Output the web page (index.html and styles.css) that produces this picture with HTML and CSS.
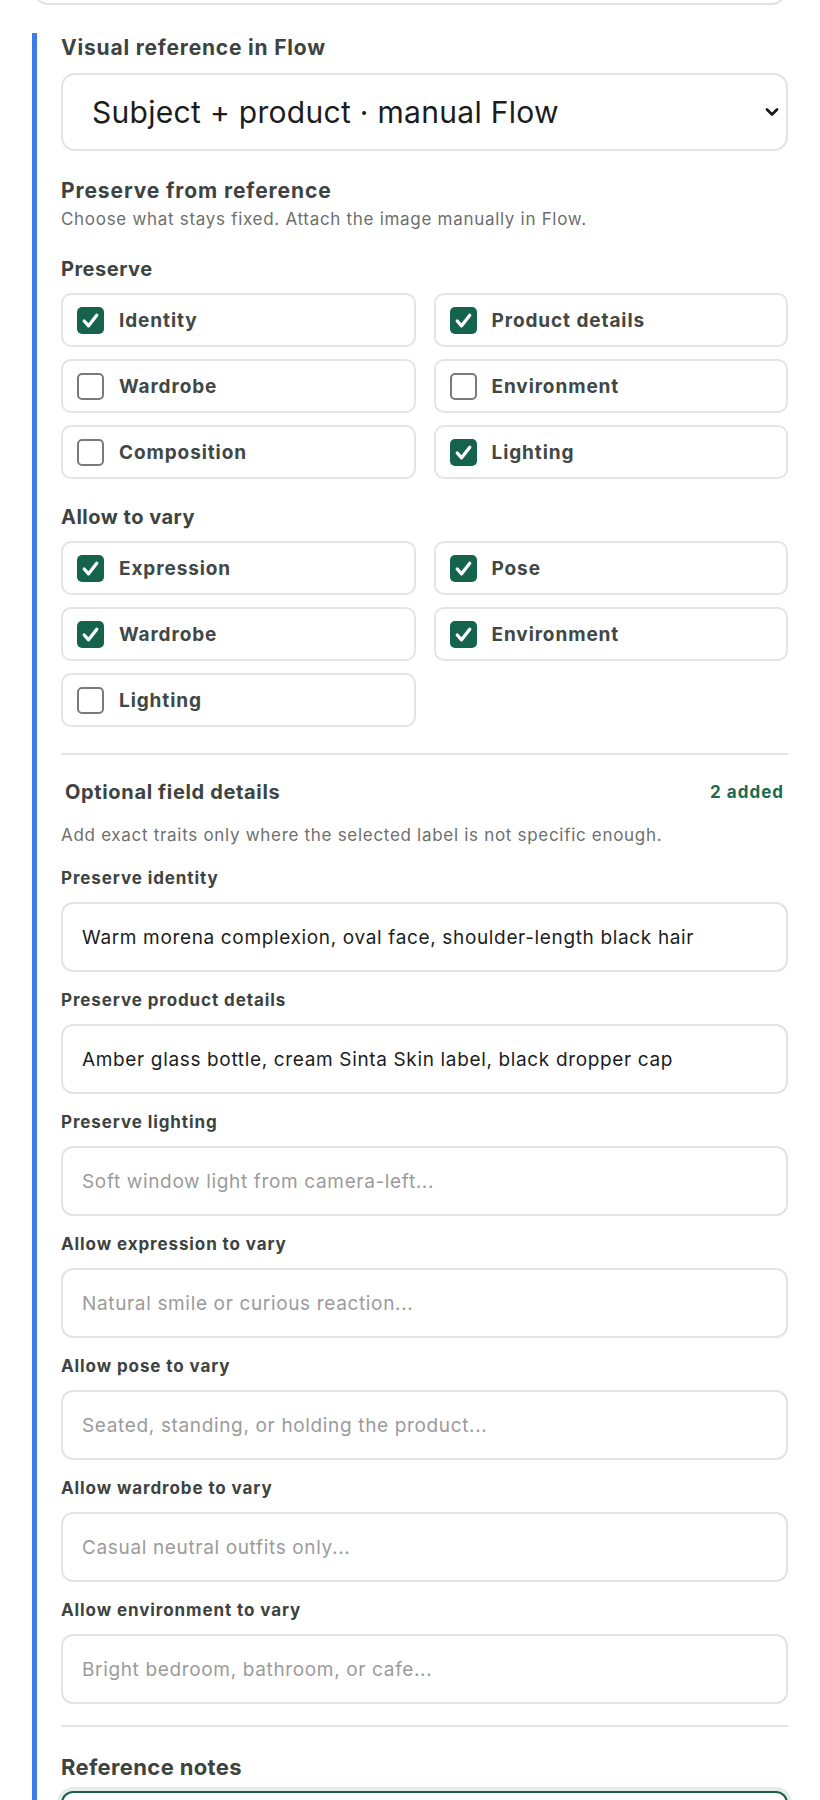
FILE: index.html
```html
<!DOCTYPE html>
<html lang="en">
	<head>
		<meta charset="utf-8">
		<title>Visual reference in Flow</title>
		<link rel="stylesheet" href="styles.css">
	</head>
	<body>
		<div class="page">
			<div class="prev-field"></div>

			<section class="ref-block">
				<label class="field-title" for="refmode">Visual reference in Flow</label>
				<div class="select-wrap">
					<select id="refmode" class="select">
						<option>Subject + product · manual Flow</option>
						<option>Subject only · manual Flow</option>
						<option>Product only · manual Flow</option>
					</select>
					<svg class="chevron" width="14" height="10" viewBox="0 0 14 10">
						<path d="M2 2.5 L7 7.5 L12 2.5" fill="none" stroke="#1c1c1c" stroke-width="2.8" stroke-linecap="round" stroke-linejoin="round"/>
					</svg>
				</div>

				<h3 class="group-title">Preserve from reference</h3>
				<p class="hint">Choose what stays fixed. Attach the image manually in Flow.</p>

				<div class="sub-title">Preserve</div>
				<div class="check-grid">
					<label class="check-card"><span class="box on"><svg viewBox="0 0 28 28"><path d="M7.5 14.5 L12 19.5 L20.5 8.5"/></svg></span>Identity</label>
					<label class="check-card"><span class="box on"><svg viewBox="0 0 28 28"><path d="M7.5 14.5 L12 19.5 L20.5 8.5"/></svg></span>Product details</label>
					<label class="check-card"><span class="box"></span>Wardrobe</label>
					<label class="check-card"><span class="box"></span>Environment</label>
					<label class="check-card"><span class="box"></span>Composition</label>
					<label class="check-card"><span class="box on"><svg viewBox="0 0 28 28"><path d="M7.5 14.5 L12 19.5 L20.5 8.5"/></svg></span>Lighting</label>
				</div>

				<div class="sub-title vary">Allow to vary</div>
				<div class="check-grid">
					<label class="check-card"><span class="box on"><svg viewBox="0 0 28 28"><path d="M7.5 14.5 L12 19.5 L20.5 8.5"/></svg></span>Expression</label>
					<label class="check-card"><span class="box on"><svg viewBox="0 0 28 28"><path d="M7.5 14.5 L12 19.5 L20.5 8.5"/></svg></span>Pose</label>
					<label class="check-card"><span class="box on"><svg viewBox="0 0 28 28"><path d="M7.5 14.5 L12 19.5 L20.5 8.5"/></svg></span>Wardrobe</label>
					<label class="check-card"><span class="box on"><svg viewBox="0 0 28 28"><path d="M7.5 14.5 L12 19.5 L20.5 8.5"/></svg></span>Environment</label>
					<label class="check-card"><span class="box"></span>Lighting</label>
				</div>

				<hr class="divider">

				<div class="details-head">
					<span>Optional field details</span>
					<span class="count">2 added</span>
				</div>
				<p class="hint details-hint">Add exact traits only where the selected label is not specific enough.</p>

				<div class="field">
					<label class="field-label">Preserve identity</label>
					<input class="text-input" type="text" value="Warm morena complexion, oval face, shoulder-length black hair">
				</div>
				<div class="field">
					<label class="field-label">Preserve product details</label>
					<input class="text-input" type="text" value="Amber glass bottle, cream Sinta Skin label, black dropper cap">
				</div>
				<div class="field">
					<label class="field-label">Preserve lighting</label>
					<input class="text-input" type="text" placeholder="Soft window light from camera-left...">
				</div>
				<div class="field">
					<label class="field-label">Allow expression to vary</label>
					<input class="text-input" type="text" placeholder="Natural smile or curious reaction...">
				</div>
				<div class="field">
					<label class="field-label">Allow pose to vary</label>
					<input class="text-input" type="text" placeholder="Seated, standing, or holding the product...">
				</div>
				<div class="field">
					<label class="field-label">Allow wardrobe to vary</label>
					<input class="text-input" type="text" placeholder="Casual neutral outfits only...">
				</div>
				<div class="field">
					<label class="field-label">Allow environment to vary</label>
					<input class="text-input" type="text" placeholder="Bright bedroom, bathroom, or cafe...">
				</div>

				<hr class="divider bottom">

				<label class="field-title notes-title">Reference notes</label>
				<textarea class="notes"></textarea>
			</section>
		</div>
	</body>
</html>
```

FILE: styles.css
```css
* {
	margin: 0;
	padding: 0;
	box-sizing: border-box;
}

body {
	background: #fff;
	font-family: "Inter", "Liberation Sans", sans-serif;
	color: #3d4341;
}

.page {
	padding: 0 32px 0 32px;
}

.prev-field {
	height: 60px;
	margin-top: -55px;
	margin-left: 2px;
	margin-right: 2px;
	border: 2px solid #e3e3e3;
	border-radius: 14px;
}

.ref-block {
	margin-top: 28px;
	border-left: 5px solid #3b7de2;
	padding: 3px 0 0 24px;
}

	.field-title {
		display: block;
		font-size: 21px;
		line-height: 24px;
		font-weight: 700;
		letter-spacing: 0.8px;
		color: #3d4341;
	}

	.select-wrap {
		position: relative;
		margin-top: 13px;
	}

		.select {
			display: block;
			width: 100%;
			height: 78px;
			padding: 0 50px 0 29px;
			border: 2px solid #e3e3e3;
			border-radius: 14px;
			background: #fff;
			font-family: inherit;
			font-size: 30px;
			letter-spacing: 0.3px;
			color: #1c1c1c;
			appearance: none;
			-webkit-appearance: none;
			outline: none;
		}

		.chevron {
			position: absolute;
			right: 9px;
			top: 34px;
		}

	.group-title {
		margin-top: 28px;
		font-size: 21px;
		line-height: 24px;
		font-weight: 700;
		letter-spacing: 0.9px;
	}

	.hint {
		margin-top: 5px;
		font-size: 17px;
		line-height: 22px;
		letter-spacing: 0.7px;
		color: #6d6f6e;
	}

	.sub-title {
		margin-top: 27px;
		font-size: 20px;
		line-height: 24px;
		font-weight: 700;
		letter-spacing: 0.5px;
	}

	.sub-title.vary {
		margin-top: 26px;
	}

	.check-grid {
		display: grid;
		grid-template-columns: 1fr 1fr;
		gap: 12px 18px;
		margin-top: 12px;
	}

		.check-card {
			display: flex;
			align-items: center;
			gap: 15px;
			height: 54px;
			padding: 0 14px;
			border: 2px solid #e4e4e4;
			border-radius: 10px;
			font-size: 19px;
			font-weight: 700;
			letter-spacing: 0.9px;
			color: #414745;
		}

		.box {
			flex: none;
			width: 27px;
			height: 27px;
			border: 2px solid #7a7a7a;
			border-radius: 5px;
			background: #fff;
		}

		.box.on {
			border: none;
			background: #14634a;
		}

			.box svg {
				display: block;
				width: 27px;
				height: 27px;
			}

			.box path {
				fill: none;
				stroke: #fff;
				stroke-width: 3.4;
				stroke-linecap: round;
				stroke-linejoin: round;
			}

	.divider {
		border: none;
		border-top: 2px solid #e3e3e3;
		margin-top: 26px;
	}

	.details-head {
		display: flex;
		justify-content: space-between;
		align-items: center;
		margin-top: 25px;
		padding: 0 4px;
		font-size: 20px;
		line-height: 24px;
		font-weight: 700;
		letter-spacing: 0.65px;
	}

		.count {
			font-size: 17px;
			letter-spacing: 1px;
			color: #1b6b4c;
		}

	.details-hint {
		margin-top: 20px;
	}

	.field {
		margin-top: 22px;
	}

	.field + .field {
		margin-top: 18px;
	}

		.field-label {
			display: block;
			font-size: 17px;
			line-height: 20px;
			font-weight: 700;
			letter-spacing: 0.9px;
			color: #3d4341;
		}

		.text-input {
			display: block;
			width: 100%;
			height: 70px;
			margin-top: 14px;
			padding: 0 19px;
			border: 2px solid #e3e3e3;
			border-radius: 12px;
			font-family: inherit;
			font-size: 19px;
			letter-spacing: 0.65px;
			color: #1c1c1c;
			outline: none;
		}

		.text-input::placeholder {
			color: #9b9b9b;
		}

	.divider.bottom {
		margin-top: 21px;
	}

	.notes-title {
		margin-top: 27px;
		font-size: 22px;
		line-height: 26px;
		letter-spacing: 0.35px;
	}

	.notes {
		display: block;
		width: 100%;
		height: 140px;
		margin-top: 11px;
		border: 2px solid #1d5e48;
		border-radius: 12px;
		box-shadow: 0 0 0 4px #e4ede9;
		resize: none;
		outline: none;
	}
```
